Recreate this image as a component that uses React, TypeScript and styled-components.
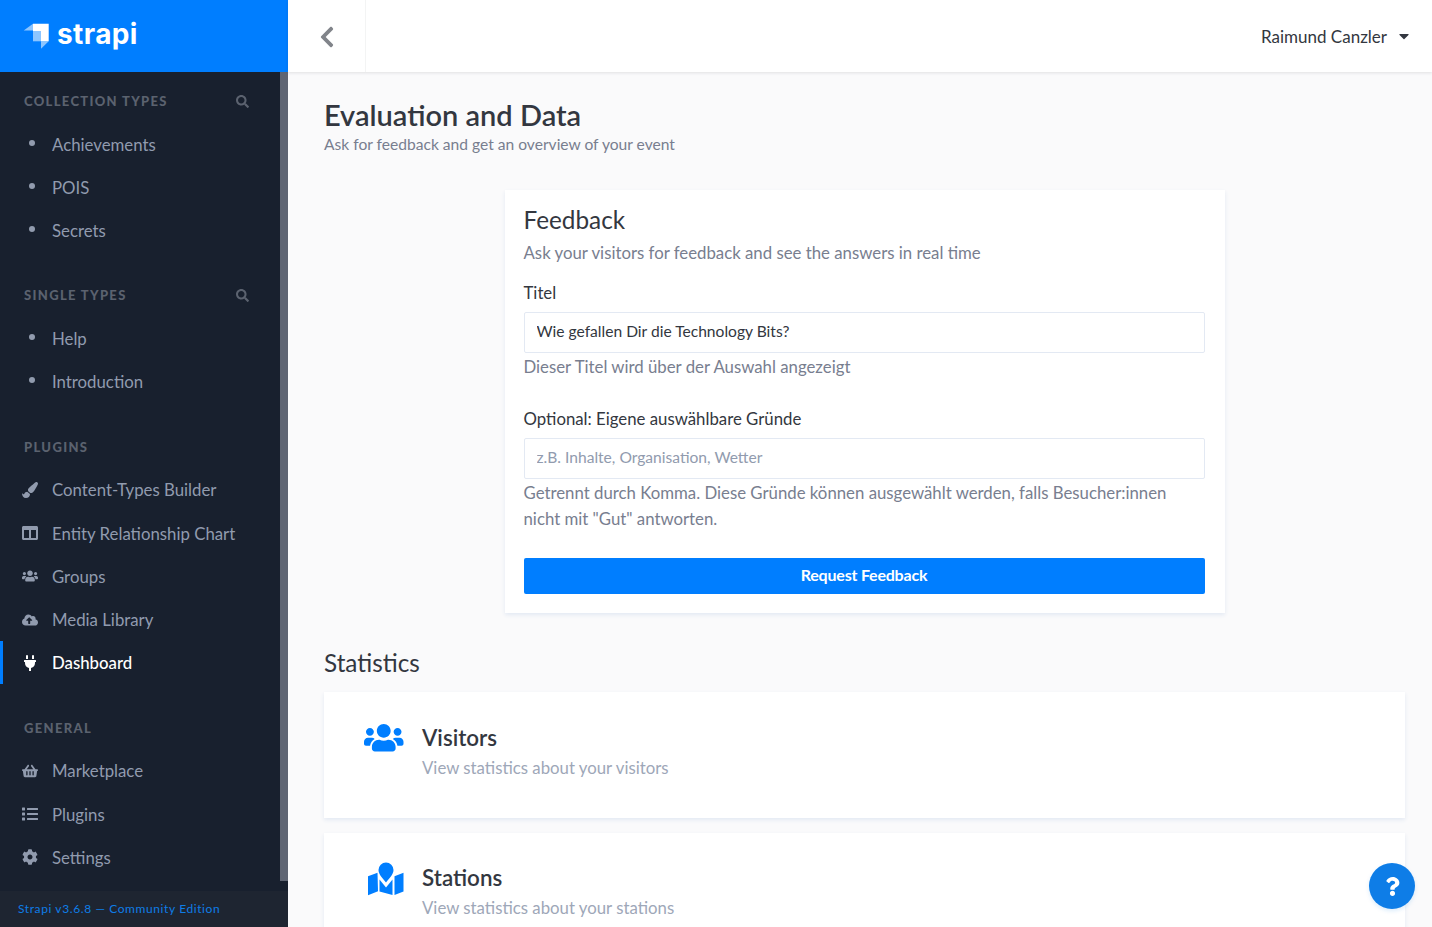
import React from "react";
import styled, { createGlobalStyle } from "styled-components";
import { FaPaintBrush, FaColumns, FaUsers, FaCloudUploadAlt, FaPlug, FaShoppingBasket, FaList, FaCog, FaSearch, FaChevronLeft, FaQuestion, FaCaretDown } from "react-icons/fa";

const Global = createGlobalStyle`
  html, body { margin: 0; padding: 0; height: 100%; overflow: hidden; }
  * { box-sizing: border-box; }
  body { font-family: "Lato", "Liberation Sans", sans-serif; background: #fafafb; color: #333740; }
`;
const Page = styled.div`display: flex; width: 1432px; height: 927px; overflow: hidden; position: relative;`;
const Side = styled.aside`width: 288px; flex: none; display: flex; flex-direction: column; background: #18202e;`;
const Brand = styled.div`height: 72px; flex: none; background: #007eff; display: flex; align-items: center; padding-left: 23px; gap: 8px;`;
const Word = styled.span`font-family: "Inter", sans-serif; font-weight: 700; font-size: 28px; line-height: 1; color: #fff; letter-spacing: 0.4px; margin-top: -4px;`;
const NavWrap = styled.div`flex: 1; display: flex; min-height: 0; padding-bottom: 10px;`;
const Nav = styled.nav`flex: 1; padding-top: 18px; overflow: hidden;`;
const Thumb = styled.div`width: 8px; flex: none; background: #5f6573;`;
const Section = styled.section`margin-bottom: 32.1px;`;
const SecHead = styled.div`height: 22px; display: flex; align-items: center; justify-content: space-between; padding: 0 31px 0 24px; margin-bottom: 10.6px;`;
const SecTitle = styled.span`font-size: 13px; font-weight: 900; letter-spacing: 1.33px; color: #5b626f; text-transform: uppercase;`;
const SearchIcon = styled(FaSearch)`width: 13px; height: 13px; color: #5b626f;`;
const Row = styled.div<{ $active?: boolean }>`
  height: 43.25px; display: flex; align-items: center; padding-left: ${p => (p.$active ? 19 : 22)}px;
  border-left: ${p => (p.$active ? "3px solid #007eff" : "none")};
  color: ${p => (p.$active ? "#fff" : "#919bae")}; font-size: 16.8px;
  font-weight: ${p => (p.$active ? 500 : 400)};
`;
const IconBox = styled.span`width: 16px; height: 16px; flex: none; margin-right: 14px; display: flex; align-items: center; justify-content: center; font-size: 16px;`;
const Dot = styled.span`width: 6px; height: 6px; border-radius: 50%; background: #919bae; margin: -3px 0 0 3px;`;
const Foot = styled.div`height: 36px; flex: none; background: #1e2531; display: flex; align-items: center; padding: 0 0 2px 18px; color: #0e7de7; font-size: 12px; letter-spacing: 0.6px;`;
const Main = styled.main`flex: 1; min-width: 0; display: flex; flex-direction: column; background: #fafafb;`;
const Top = styled.header`height: 72px; flex: none; background: #fff; box-shadow: 0 1px 3px rgba(40,42,49,.12); display: flex; align-items: stretch; justify-content: space-between; padding-right: 20px;`;
const Back = styled.div`width: 78px; border-right: 1px solid #f3f4f4; display: flex; align-items: center; justify-content: center; color: #81848a; font-size: 24px; padding-top: 2px;`;
const User = styled.div`display: flex; align-items: center; gap: 9px; font-size: 17px; color: #333740;`;
const Body = styled.div`flex: 1; min-height: 0; overflow: hidden; padding: 24px 27px 0 36px;`;
const H1 = styled.h1`margin: 0; font-size: 29px; line-height: 38px; font-weight: 600; color: #333740;`;
const Sub = styled.p`margin: 1px 0 0; font-size: 15.6px; line-height: 19px; color: #787e8f;`;
const FormCard = styled.section`width: 720px; margin: 36px auto 0; background: #fff; box-shadow: 0 2px 4px #e3e9f3; padding: 14px 20px 19px 19px;`;
const H2 = styled.h2`margin: 0; font-size: 24.3px; line-height: 32px; font-weight: 400; color: #333740;`;
const Desc = styled.p`margin: 4px 0 0; font-size: 16.8px; line-height: 26px; color: #787e8f;`;
const Label = styled.label<{ $gap: number }>`display: block; margin-top: ${p => p.$gap}px; font-size: 16.8px; line-height: 26px; color: #333740;`;
const Input = styled.input`display: block; width: 100%; height: 41px; margin-top: 6px; padding: 0 12px 3px; border: 1px solid #e3e9f3; border-radius: 2px; background: #fff; font-family: inherit; font-size: 15.6px; color: #333740; outline: none;
  &::placeholder { color: #919bae; opacity: 1; }`;
const Hint = styled.p`margin: 1px 0 0; font-size: 16.8px; line-height: 26px; color: #787e8f;`;
const Submit = styled.button`display: block; width: 100%; height: 36px; margin-top: 26px; padding: 0 0 3px; border: 0; border-radius: 2px; background: #007eff; color: #fff; font-family: inherit; font-weight: 700; font-size: 16px; letter-spacing: -0.2px;`;
const H3 = styled.h2`margin: 34px 0 13px; font-size: 24.3px; line-height: 32px; font-weight: 400; color: #333740;`;
const StatCard = styled.section`height: 126px; background: #fff; box-shadow: 0 2px 4px #e3e9f3; display: flex; padding: 29.6px 0 0 40px; margin-bottom: 14.5px;`;
const StatIcon = styled.div`width: 40px; height: 33px; flex: none; color: #007eff; font-size: 39.5px; display: flex; align-items: center; justify-content: center; margin-right: 18px;`;
const StatTitle = styled.h3`margin: 0; font-size: 22.4px; line-height: 32px; font-weight: 600; color: #333740;`;
const StatSub = styled.p`margin: 1.3px 0 0; font-size: 16.8px; line-height: 26px; color: #9ea7b8;`;
const Help = styled.button`position: absolute; left: 1369px; top: 863px; width: 46px; height: 46px; border: 0; border-radius: 50%; background: #0e7de7; color: #fff; display: flex; align-items: center; justify-content: center; font-size: 19px; box-shadow: 0 2px 4px rgba(14,125,231,.15); padding: 0;`;
const StationsSvg = styled.svg`flex: none; margin-left: 3px;`;

const Logo = () => (
  <svg width="26" height="26" viewBox="0 0 26 26">
    <path d="M10 .7H25.700V18.300H18V8H10z" fill="#fff" />
    <path d="M10 .7V7.500H.7z" fill="#fff" opacity=".55" />
    <path d="M10 8h8v10.300h-8z" fill="#fff" opacity=".55" />
    <path d="M18 18.300h7.700L18 25.700z" fill="#fff" opacity=".55" />
  </svg>
);

const StationsIcon = () => (
  <StationsSvg width="36" height="34" viewBox="0 0 36 34" fill="currentColor">
    <path d="M18 .5a7.500 7.500 0 0 1 7.500 7.500c0 4.500-4.500 8.500-7.500 12.500c-3-4-7.500-8-7.500-12.500A7.500 7.500 0 0 1 18 .5z" />
    <path d="M0 14.300L9.500 10.700L10 29.300L0 33.300z" />
    <path d="M11.500 17.500L18 25.500L24.500 17.500V33L11.500 29.500z" />
    <path d="M26.500 14.300L35.500 10.700V29.500L26.500 33z" />
  </StationsSvg>
);

const collections = ["Achievements", "POIS", "Secrets"];
const singles = ["Help", "Introduction"];
const plugins: [React.ReactNode, string, boolean?][] = [
  [<FaPaintBrush />, "Content-Types Builder"],
  [<FaColumns />, "Entity Relationship Chart"],
  [<FaUsers />, "Groups"],
  [<FaCloudUploadAlt />, "Media Library"],
  [<FaPlug />, "Dashboard", true],
];
const general: [React.ReactNode, string][] = [
  [<FaShoppingBasket />, "Marketplace"],
  [<FaList />, "Plugins"],
  [<FaCog />, "Settings"],
];

export default function App() {
  return (
    <Page>
      <Global />
      <Side>
        <Brand><Logo /><Word>strapi</Word></Brand>
        <NavWrap>
          <Nav>
            <Section>
              <SecHead><SecTitle>Collection Types</SecTitle><SearchIcon /></SecHead>
              {collections.map(t => <Row key={t}><IconBox><Dot /></IconBox>{t}</Row>)}
            </Section>
            <Section>
              <SecHead><SecTitle>Single Types</SecTitle><SearchIcon /></SecHead>
              {singles.map(t => <Row key={t}><IconBox><Dot /></IconBox>{t}</Row>)}
            </Section>
            <Section>
              <SecHead><SecTitle>Plugins</SecTitle></SecHead>
              {plugins.map(([i, t, a]) => <Row key={t} $active={a}><IconBox>{i}</IconBox>{t}</Row>)}
            </Section>
            <Section>
              <SecHead><SecTitle>General</SecTitle></SecHead>
              {general.map(([i, t]) => <Row key={t}><IconBox>{i}</IconBox>{t}</Row>)}
            </Section>
          </Nav>
          <Thumb />
        </NavWrap>
        <Foot>Strapi v3.6.8 — Community Edition</Foot>
      </Side>
      <Main>
        <Top>
          <Back><FaChevronLeft /></Back>
          <User>Raimund Canzler <FaCaretDown size={16} /></User>
        </Top>
        <Body>
          <H1>Evaluation and Data</H1>
          <Sub>Ask for feedback and get an overview of your event</Sub>
          <FormCard>
            <H2>Feedback</H2>
            <Desc>Ask your visitors for feedback and see the answers in real time</Desc>
            <Label $gap={14}>Titel</Label>
            <Input readOnly value="Wie gefallen Dir die Technology Bits?" />
            <Hint>Dieser Titel wird über der Auswahl angezeigt</Hint>
            <Label $gap={26}>Optional: Eigene auswählbare Gründe</Label>
            <Input readOnly placeholder="z.B. Inhalte, Organisation, Wetter" />
            <Hint>Getrennt durch Komma. Diese Gründe können ausgewählt werden, falls Besucher:innen nicht mit "Gut" antworten.</Hint>
            <Submit>Request Feedback</Submit>
          </FormCard>
          <H3>Statistics</H3>
          <StatCard>
            <StatIcon><FaUsers /></StatIcon>
            <div><StatTitle>Visitors</StatTitle><StatSub>View statistics about your visitors</StatSub></div>
          </StatCard>
          <StatCard>
            <StatIcon><StationsIcon /></StatIcon>
            <div><StatTitle>Stations</StatTitle><StatSub>View statistics about your stations</StatSub></div>
          </StatCard>
        </Body>
      </Main>
      <Help><FaQuestion /></Help>
    </Page>
  );
}
